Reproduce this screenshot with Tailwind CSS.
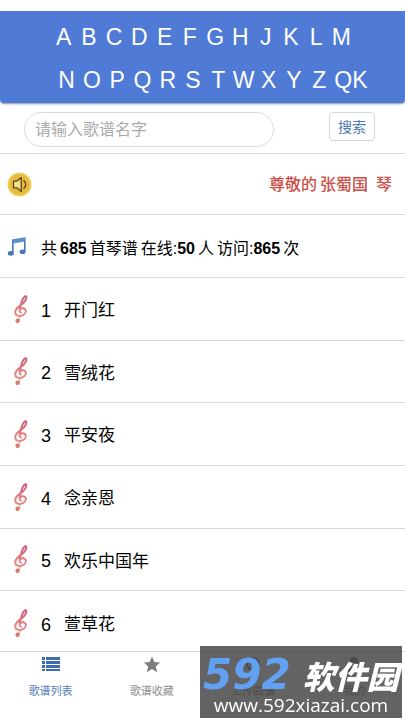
<!DOCTYPE html>
<html lang="zh-CN">
<head>
<meta charset="utf-8">
<meta name="viewport" content="width=device-width, initial-scale=1">
<title>歌谱列表</title>
<script src="https://cdn.jsdelivr.net/npm/@tailwindcss/browser@4"></script>
</head>
<body class="bg-white font-['Liberation_Sans','Noto_Sans_CJK_SC',sans-serif] text-black">
<svg class="absolute size-0" aria-hidden="true">
  <defs>
    <linearGradient id="clefFill" gradientUnits="userSpaceOnUse" x1="0" y1="0" x2="0" y2="32">
      <stop offset="0" stop-color="#c0587a"/>
      <stop offset="0.45" stop-color="#e07a80"/>
      <stop offset="1" stop-color="#e6a08c"/>
    </linearGradient>
    <symbol id="clef" viewBox="0 0 16 32">
      <g fill="none" stroke="url(#clefFill)" stroke-linecap="round">
        <path stroke-width="2" d="M6.6 17C7.400 13 8 10.600 9 7.800C10 4.800 12.400 2.400 13.200 3.400C14.200 5.200 12 8.800 9 11.200C4.600 14.200 2.200 16.400 2.200 19.200C2.200 22 5 23.400 8.200 22.800C11.400 22 13.200 19.600 12.800 17.400C12.200 14.800 8.600 14.600 7.200 16.200C6 17.600 6.600 19.200 8 19.600"/>
        <path stroke-width="1" d="M7.600 23L6.400 25.200C6.400 28 5.400 30 4 29.800"/>
      </g>
      <circle cx="4.600" cy="27.800" r="2.200" fill="#d87a6c"/>
    </symbol>
  </defs>
</svg>
<div class="flex min-h-screen flex-col pt-[11px]">
  <header class="rounded-b-sm bg-[#4f7ad6] pt-[5px] pb-px text-[23px] leading-[43px] text-white shadow-[0_1px_2px_#8a93a8]">
    <nav aria-label="首字母" class="text-center">
      <div class="flex pr-[51px] pl-[51px]">
        <a href="#A" class="flex-1">A</a><a href="#B" class="flex-1">B</a><a href="#C" class="flex-1">C</a><a href="#D" class="flex-1">D</a><a href="#E" class="flex-1">E</a><a href="#F" class="flex-1">F</a><a href="#G" class="flex-1">G</a><a href="#H" class="flex-1">H</a><a href="#J" class="flex-1">J</a><a href="#K" class="flex-1">K</a><a href="#L" class="flex-1">L</a><a href="#M" class="flex-1">M</a>
      </div>
      <div class="flex pr-[35px] pl-[54px]">
        <a href="#N" class="flex-1">N</a><a href="#O" class="flex-1">O</a><a href="#P" class="flex-1">P</a><a href="#Q" class="flex-1">Q</a><a href="#R" class="flex-1">R</a><a href="#S" class="flex-1">S</a><a href="#T" class="flex-1">T</a><a href="#W" class="flex-1">W</a><a href="#X" class="flex-1">X</a><a href="#Y" class="flex-1">Y</a><a href="#Z" class="flex-1">Z</a><a href="#QK" class="w-[38px]">QK</a>
      </div>
    </nav>
  </header>

  <form class="flex h-[51px] items-start border-b border-[#d8d8d8] pt-[9px] pr-[30px] pl-6">
    <input type="search" aria-label="请输入歌谱名字" placeholder="请输入歌谱名字" class="h-[35px] w-[250px] rounded-full border border-[#dcdcdc] px-[10px] text-base placeholder:text-[#aaaaaa]">
    <button type="submit" class="ml-auto h-[29px] w-[46px] rounded border border-[#d4d8e0] text-sm text-[#5078b0]">搜索</button>
  </form>

  <section class="flex h-[61px] items-center border-b border-[#d8d8d8] pr-[13px] pl-[7px]">
    <svg class="size-[25px]" viewBox="0 0 25 25" aria-hidden="true">
      <circle cx="12.500" cy="12.500" r="12" fill="#f3cf58"/>
      <circle cx="12.500" cy="12.500" r="10.500" fill="#e6bb45"/>
      <path d="M6.500 9.200H9.800L14.200 5.600V19.400L9.800 15.800H6.500Z" fill="#f6e08c" stroke="#5a4212" stroke-width="1.300" stroke-linejoin="round"/>
      <path d="M17 8.800C19.200 10.800 19.200 14.200 17 16.200" fill="none" stroke="#5a4212" stroke-width="1.300" stroke-linecap="round"/>
    </svg>
    <p class="ml-auto flex gap-[3px] pt-px font-medium text-[#cc5048]"><span>尊敬的</span><span>张蜀国</span><span class="pl-[5px]">琴</span></p>
  </section>

  <section class="flex h-[63px] items-center border-b border-[#d8d8d8] pt-[5px] pl-[7px]">
    <svg class="mb-1 size-5" viewBox="0 0 20 20" aria-hidden="true">
      <path d="M5.800 15.500V3.200L17.800 1.200V14" fill="none" stroke="#4777b8" stroke-width="1.600"/>
      <path d="M5.800 3L17.800 1V4.400L5.800 6.400Z" fill="#5b90cf"/>
      <ellipse cx="3.800" cy="16.400" rx="3" ry="2.300" fill="#4777b8"/>
      <ellipse cx="15.600" cy="14.800" rx="3" ry="2.300" fill="#4777b8"/>
    </svg>
    <p class="ml-[14px] flex gap-[3px]"><span>共</span><b>685</b><span>首琴谱</span><span>在线:<b>50</b></span><span>人</span><span>访问:<b>865</b></span><span>次</span></p>
  </section>

  <main class="flex flex-1 flex-col">
    <ol class="grid flex-1 grid-rows-6 text-[17px]">
      <li class="flex items-center border-b border-[#d8d8d8]"><a href="#song1" class="flex items-center pt-1 pl-[13px]"><svg class="mb-1 h-8 w-4" aria-hidden="true"><use href="#clef"/></svg><span class="w-[35px] pl-3 text-lg">1</span><span>开门红</span></a></li>
      <li class="flex items-center border-b border-[#d8d8d8]"><a href="#song2" class="flex items-center pt-1 pl-[13px]"><svg class="mb-1 h-8 w-4" aria-hidden="true"><use href="#clef"/></svg><span class="w-[35px] pl-3 text-lg">2</span><span>雪绒花</span></a></li>
      <li class="flex items-center border-b border-[#d8d8d8]"><a href="#song3" class="flex items-center pt-1 pl-[13px]"><svg class="mb-1 h-8 w-4" aria-hidden="true"><use href="#clef"/></svg><span class="w-[35px] pl-3 text-lg">3</span><span>平安夜</span></a></li>
      <li class="flex items-center border-b border-[#d8d8d8]"><a href="#song4" class="flex items-center pt-1 pl-[13px]"><svg class="mb-1 h-8 w-4" aria-hidden="true"><use href="#clef"/></svg><span class="w-[35px] pl-3 text-lg">4</span><span>念亲恩</span></a></li>
      <li class="flex items-center border-b border-[#d8d8d8]"><a href="#song5" class="flex items-center pt-1 pl-[13px]"><svg class="mb-1 h-8 w-4" aria-hidden="true"><use href="#clef"/></svg><span class="w-[35px] pl-3 text-lg">5</span><span>欢乐中国年</span></a></li>
      <li class="flex items-center"><a href="#song6" class="flex items-center pt-1 pl-[13px]"><svg class="mb-1 h-8 w-4" aria-hidden="true"><use href="#clef"/></svg><span class="w-[35px] pl-3 text-lg">6</span><span>萱草花</span></a></li>
    </ol>
  </main>

  <nav aria-label="主导航" class="relative -mt-[3px] grid h-[69px] grid-cols-4 border-t border-[#d8d8d8] bg-white text-[11px] leading-4 text-[#8f8f8f]">
    <a href="#list" class="flex flex-col items-center gap-[10px] pt-1 text-[#5580b8]">
      <svg class="h-[17px] w-[18px]" viewBox="0 0 18 17" fill="#3f6cb0" aria-hidden="true"><path d="M0 1h3v3H0zM4 1h14v3H4zM0 5h3v3H0zM4 5h14v3H4zM0 9h3v3H0zM4 9h14v3H4zM0 13h3v2H0zM4 13h14v2H4z"/></svg>
      <span>歌谱列表</span></a>
    <a href="#favorites" class="flex flex-col items-center gap-[10px] pt-1">
      <svg class="h-[17px] w-[18px]" viewBox="0 0 18 17" fill="#7d7d7d" aria-hidden="true"><path d="M9 .5L11.400 6L17.200 6.500L12.800 10.400L14.200 16.200L9 13.100L3.800 16.200L5.200 10.400L.8 6.500L6.600 6Z"/></svg>
      <span>歌谱收藏</span></a>
    <a href="#upload" class="flex flex-col items-center gap-[10px] pt-1">
      <svg class="h-[17px] w-[18px]" viewBox="0 0 18 17" aria-hidden="true"><circle cx="9" cy="8" r="6" fill="none" stroke="#7d7d7d" stroke-width="2"/><path d="M9 4.500L12 8H10V11.500H8V8H6Z" fill="#7d7d7d"/></svg>
      <span>上传曲谱</span></a>
    <a href="#mine" class="flex flex-col items-center gap-[10px] pt-1">
      <svg class="h-[17px] w-[18px]" viewBox="0 0 18 17" fill="#7d7d7d" aria-hidden="true"><circle cx="9" cy="5" r="4"/><path d="M2.500 16C2.500 8 15.500 8 15.500 16Z"/></svg>
      <span>我的</span></a>
  </nav>
</div>

<aside class="fixed right-[3px] bottom-[2px] flex h-[72px] w-[202px] flex-col bg-[#3c3c3c]/80 pt-[11px] text-white">
  <p class="flex h-9 items-center pl-[3px] whitespace-nowrap"><span class="font-['DejaVu_Sans'] text-[42px] leading-9 font-bold text-[#62a0f2] italic">592</span><span class="ml-3 font-['Noto_Sans_CJK_SC'] text-[32px] leading-9 font-black italic">软件园</span></p>
  <p class="text-center font-['Open_Sans'] text-[19px] leading-6 font-medium">www.592xiazai.com</p>
</aside>
</body>
</html>
